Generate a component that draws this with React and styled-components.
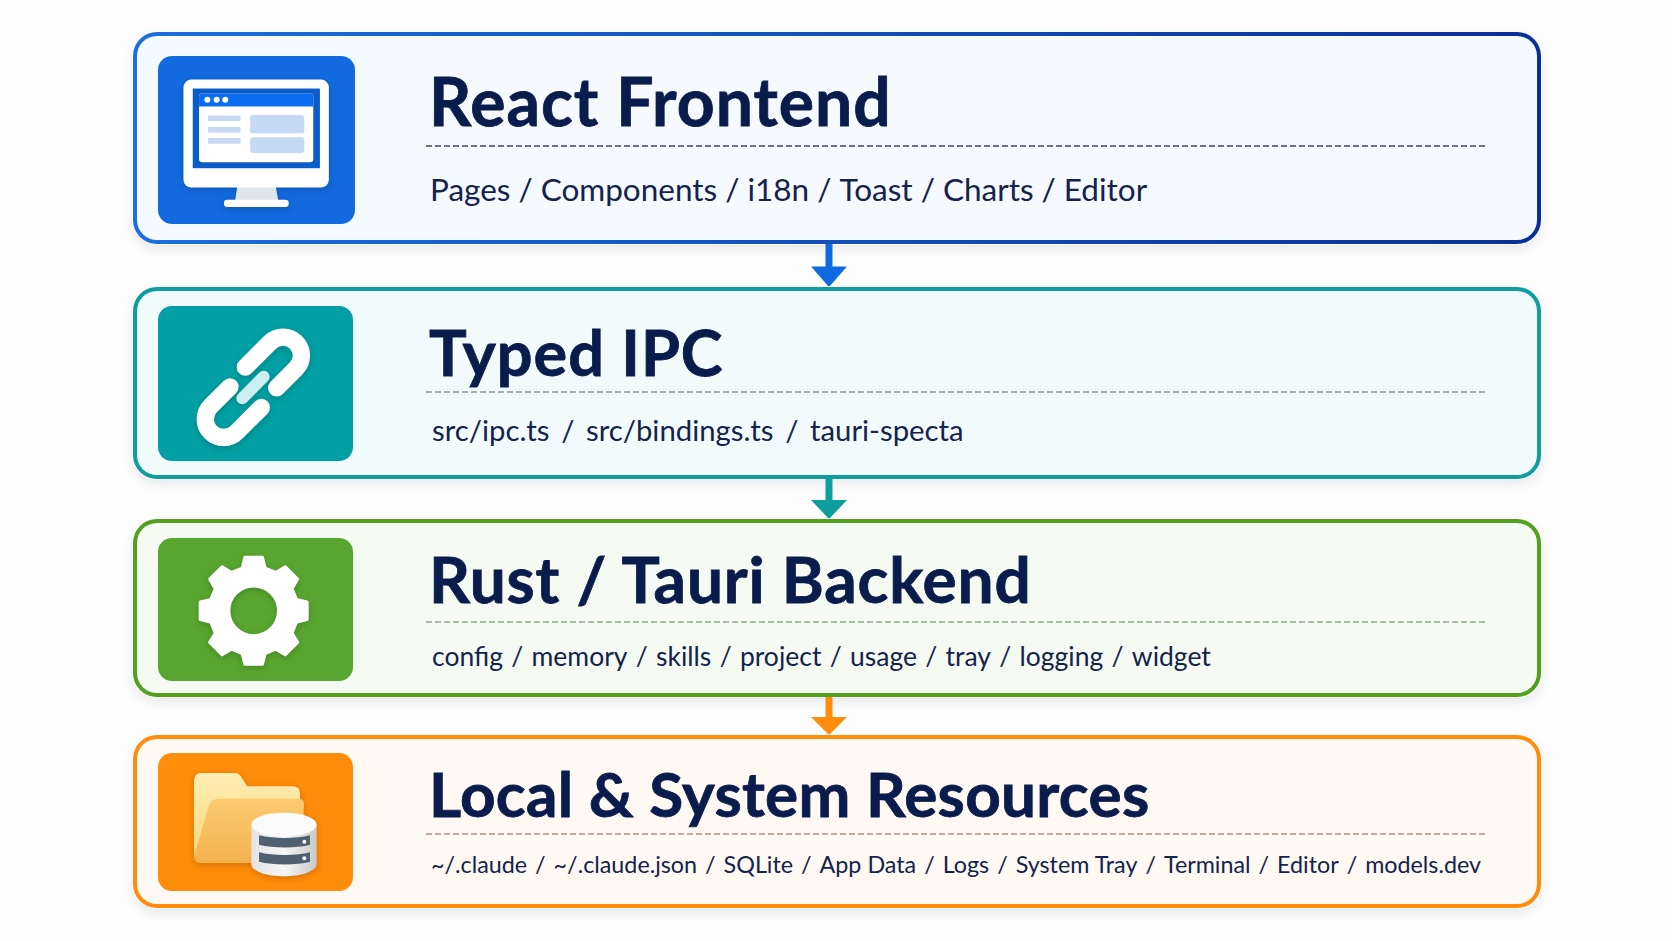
import React from "react";
import styled, { createGlobalStyle } from "styled-components";

const GlobalStyle = createGlobalStyle`
  html, body {
    margin: 0;
    padding: 0;
    background: #fdfdfd;
    font-family: Lato, "Noto Sans", "Liberation Sans", sans-serif;
  }
`;

const gearPath = () => {
  const cx = 401;
  const cy = 303;
  const pts = [];
  for (let i = 0; i < 8; i++) {
    const a = (i * Math.PI) / 4 - Math.PI / 2;
    const along = [Math.cos(a), Math.sin(a)];
    const across = [-Math.sin(a), Math.cos(a)];
    const at = (r, w) => [cx + along[0] * r + across[0] * w, cy + along[1] * r + across[1] * w];
    pts.push(at(128, -34), at(160, -26), at(160, 26), at(128, 34));
  }
  const outer = "M" + pts.map((p) => p[0].toFixed(1) + " " + p[1].toFixed(1)).join("L") + "Z";
  const hole = `M${cx - 75} ${cy}a75 75 0 1 0 150 0a75 75 0 1 0 -150 0Z`;
  return outer + hole;
};

const MonitorIcon = () => (
  <IconSvg viewBox="114 107 592 506">
    <path d="M353 495H467L476 545H345Z" fill="#dfe6ea" />
    <rect x="312" y="540" width="195" height="22" rx="10" fill="#fff" />
    <rect x="190" y="178" width="438" height="325" rx="24" fill="#fff" />
    <rect x="218" y="205" width="383" height="240" fill="#0c5cc8" />
    <rect x="237" y="219" width="344" height="208" rx="10" fill="#fff" />
    <path d="M247 219H571a10 10 0 0 1 10 10V259H237V229a10 10 0 0 1 10-10Z" fill="#0a6df0" />
    <circle cx="262" cy="239" r="9" fill="#fff" />
    <circle cx="290" cy="239" r="9" fill="#fff" />
    <circle cx="316" cy="239" r="9" fill="#fff" />
    <rect x="264" y="286" width="98" height="17" rx="3" fill="#c8daf3" />
    <rect x="264" y="321" width="98" height="17" rx="3" fill="#c8daf3" />
    <rect x="264" y="354" width="98" height="17" rx="3" fill="#c8daf3" />
    <rect x="391" y="285" width="163" height="55" rx="8" fill="#c5d9f6" />
    <rect x="391" y="352" width="163" height="47" rx="8" fill="#c5d9f6" />
  </IconSvg>
);

const LinkIcon = () => (
  <IconSvg viewBox="114 78 585 464">
    <g fill="none" stroke="#fff" strokeWidth="52" strokeLinecap="round">
      <path d="M376 261L450 187A55 55 0 0 1 528 265L470 323" />
      <path d="M424 382L350 456A55 55 0 0 1 272 378L330 320" />
    </g>
    <path d="M367 354L431 290" fill="none" stroke="#cdeef0" strokeWidth="36" strokeLinecap="round" />
  </IconSvg>
);

const GearIcon = () => (
  <IconSvg viewBox="114 85 585 428">
    <path d={gearPath()} fill="#fff" fillRule="evenodd" stroke="#fff" strokeWidth="10" strokeLinejoin="round" />
  </IconSvg>
);

const FolderIcon = () => (
  <IconSvg viewBox="114 100 585 414">
    <defs>
      <linearGradient id="folderBack" x1="0" y1="0" x2="0" y2="1">
        <stop offset="0" stopColor="#feeeb4" />
        <stop offset="1" stopColor="#fad576" />
      </linearGradient>
      <linearGradient id="folderFront" x1="0" y1="0" x2="0" y2="1">
        <stop offset="0" stopColor="#fccb70" />
        <stop offset="1" stopColor="#f4b14e" />
      </linearGradient>
      <linearGradient id="drum" x1="0" y1="0" x2="1" y2="0">
        <stop offset="0" stopColor="#e4e4e4" />
        <stop offset="0.5" stopColor="#f6f6f6" />
        <stop offset="1" stopColor="#c9c9c9" />
      </linearGradient>
    </defs>
    <path d="M245 160H345Q355 160 362 170L382 200H518Q540 200 540 222V400H245Q222 430 222 405V183Q222 160 245 160Z" fill="url(#folderBack)" />
    <path d="M298 237H535Q553 237 552 255L545 410Q545 430 525 430H245Q218 430 224 405L265 262Q272 237 298 237Z" fill="url(#folderFront)" />
    <path d="M394 315V433C394 455 440 470 492 470S590 455 590 433V315Z" fill="url(#drum)" />
    <ellipse cx="492" cy="315" rx="98" ry="36" fill="#fbfbfb" />
    <path d="M417 347C460 358 530 358 570 347V375C530 386 460 386 417 375Z" fill="#4f6071" />
    <path d="M417 398C460 409 530 409 570 398V426C530 437 460 437 417 426Z" fill="#4f6071" />
    <circle cx="553" cy="366" r="6" fill="#fff" />
    <circle cx="553" cy="416" r="6" fill="#fff" />
  </IconSvg>
);

const layers = [
  {
    title: "React Frontend",
    items: ["Pages", "Components", "i18n", "Toast", "Charts", "Editor"],
    Icon: MonitorIcon,
    border: "linear-gradient(90deg, #1a6fe0, #0a2f96)",
    bg: "#f5faff",
    tile: "#126ade",
    dash: "#6f6f97",
    arrow: "#0f6ae0",
    cardH: 212, tileW: 197, tileH: 168, tileTop: 20,
    titleH: 109, titleSize: 66, titleTrack: 1, titleShift: 20,
    subSize: 31.5, subTop: 21, subLeft: 4, sepGap: 8,
    gapAfter: 43,
  },
  {
    title: "Typed IPC",
    items: ["src/ipc.ts", "src/bindings.ts", "tauri-specta"],
    Icon: LinkIcon,
    border: "linear-gradient(90deg, #0e9e9e, #0e9e9e)",
    bg: "#f2fbfc",
    tile: "#02a0a4",
    dash: "#9fb0b4",
    arrow: "#0e9e9e",
    cardH: 192, tileW: 195, tileH: 155, tileTop: 15,
    titleH: 100, titleSize: 63, titleTrack: 1, titleShift: 20,
    subSize: 29.3, subTop: 17, subLeft: 6, sepGap: 11.6,
    gapAfter: 40,
  },
  {
    title: "Rust / Tauri Backend",
    items: ["config", "memory", "skills", "project", "usage", "tray", "logging", "widget"],
    Icon: GearIcon,
    border: "linear-gradient(90deg, #4fa11e, #4fa11e)",
    bg: "#f5fbf3",
    tile: "#58a62f",
    dash: "#a6c2a0",
    arrow: "#ff8c0c",
    cardH: 178, tileW: 195, tileH: 143, tileTop: 15,
    titleH: 98, titleSize: 64, titleTrack: 0.8, titleShift: 14,
    subSize: 26.5, subTop: 15, subLeft: 6, sepGap: 8.3,
    gapAfter: 38,
  },
  {
    title: "Local & System Resources",
    items: ["~/.claude", "~/.claude.json", "SQLite", "App Data", "Logs", "System Tray", "Terminal", "Editor", "models.dev"],
    Icon: FolderIcon,
    border: "linear-gradient(90deg, #ff8c0c, #ff8c0c)",
    bg: "#fef9f3",
    tile: "#ff8c0a",
    dash: "#c9a899",
    arrow: null,
    cardH: 173, tileW: 195, tileH: 138, tileTop: 14,
    titleH: 94, titleSize: 62, titleTrack: 0.3, titleShift: 14,
    subSize: 23.3, subTop: 14, subLeft: 5, sepGap: 8,
    gapAfter: 0,
  },
];

export default function App() {
  return (
    <React.Fragment>
      <GlobalStyle />
      <Page>
        {layers.map((l) => (
          <React.Fragment key={l.title}>
            <Card $bg={l.bg} $border={l.border} $h={l.cardH}>
              <Tile $bg={l.tile} $w={l.tileW} $h={l.tileH} $top={l.tileTop}>
                <l.Icon />
              </Tile>
              <Body>
                <TitleRow $h={l.titleH} $shift={l.titleShift}>
                  <Title $size={l.titleSize} $track={l.titleTrack}>{l.title}</Title>
                </TitleRow>
                <Rule $dash={l.dash} />
                <Items $size={l.subSize} $top={l.subTop} $left={l.subLeft}>
                  {l.items.map((item, i) => (
                    <React.Fragment key={item}>
                      {i > 0 && <Sep $gap={l.sepGap}>/</Sep>}
                      {item}
                    </React.Fragment>
                  ))}
                </Items>
              </Body>
            </Card>
            {l.arrow && (
              <Connector $h={l.gapAfter}>
                <ArrowSvg viewBox="0 0 36 40" preserveAspectRatio="none">
                  <path d="M14.5 0H21.5V21H36L18 40L0 21H14.5Z" fill={l.arrow} />
                </ArrowSvg>
              </Connector>
            )}
          </React.Fragment>
        ))}
      </Page>
    </React.Fragment>
  );
}

const Page = styled.div`
  box-sizing: border-box;
  width: 1672px;
  height: 941px;
  padding: 32px 131px 0 133px;
  display: flex;
  flex-direction: column;
  overflow: hidden;
`;

const Card = styled.div`
  box-sizing: border-box;
  height: ${(p) => p.$h}px;
  flex-shrink: 0;
  display: flex;
  align-items: flex-start;
  padding-left: 21px;
  border: 4px solid transparent;
  border-radius: 24px;
  background: linear-gradient(${(p) => p.$bg}, ${(p) => p.$bg}) padding-box,
    ${(p) => p.$border} border-box;
  box-shadow: 0 0 0 1px rgba(255, 255, 255, 0.8), 0 5px 12px rgba(40, 50, 70, 0.1);
`;

const Tile = styled.div`
  width: ${(p) => p.$w}px;
  height: ${(p) => p.$h}px;
  margin-top: ${(p) => p.$top}px;
  margin-right: ${(p) => 268 - p.$w}px;
  flex-shrink: 0;
  border-radius: 14px;
  background: ${(p) => p.$bg};
`;

const IconSvg = styled.svg`
  display: block;
  width: 100%;
  height: 100%;
  filter: drop-shadow(0 2px 3px rgba(0, 0, 0, 0.18));
`;

const Body = styled.div`
  width: 1060px;
  display: flex;
  flex-direction: column;
`;

const TitleRow = styled.div`
  box-sizing: border-box;
  height: ${(p) => p.$h}px;
  padding: ${(p) => p.$shift}px 0 0 3px;
  display: flex;
  align-items: center;
`;

const Title = styled.h2`
  margin: 0;
  font-size: ${(p) => p.$size}px;
  font-weight: 700;
  letter-spacing: ${(p) => p.$track}px;
  -webkit-text-stroke: 0.8px #0a1c4c;
  line-height: 1;
  white-space: nowrap;
  color: #0a1c4c;
`;

const Rule = styled.div`
  height: 1.5px;
  background: repeating-linear-gradient(90deg, ${(p) => p.$dash} 0 6px, transparent 6px 9px);
`;

const Items = styled.div`
  padding: ${(p) => p.$top}px 0 0 ${(p) => p.$left}px;
  font-size: ${(p) => p.$size}px;
  line-height: 1.36;
  white-space: nowrap;
  color: #14234d;
`;

const Sep = styled.span`
  margin: 0 ${(p) => p.$gap}px;
`;

const Connector = styled.div`
  height: ${(p) => p.$h}px;
  flex-shrink: 0;
  padding-left: 678px;
`;

const ArrowSvg = styled.svg`
  display: block;
  width: 36px;
  height: 100%;
`;
